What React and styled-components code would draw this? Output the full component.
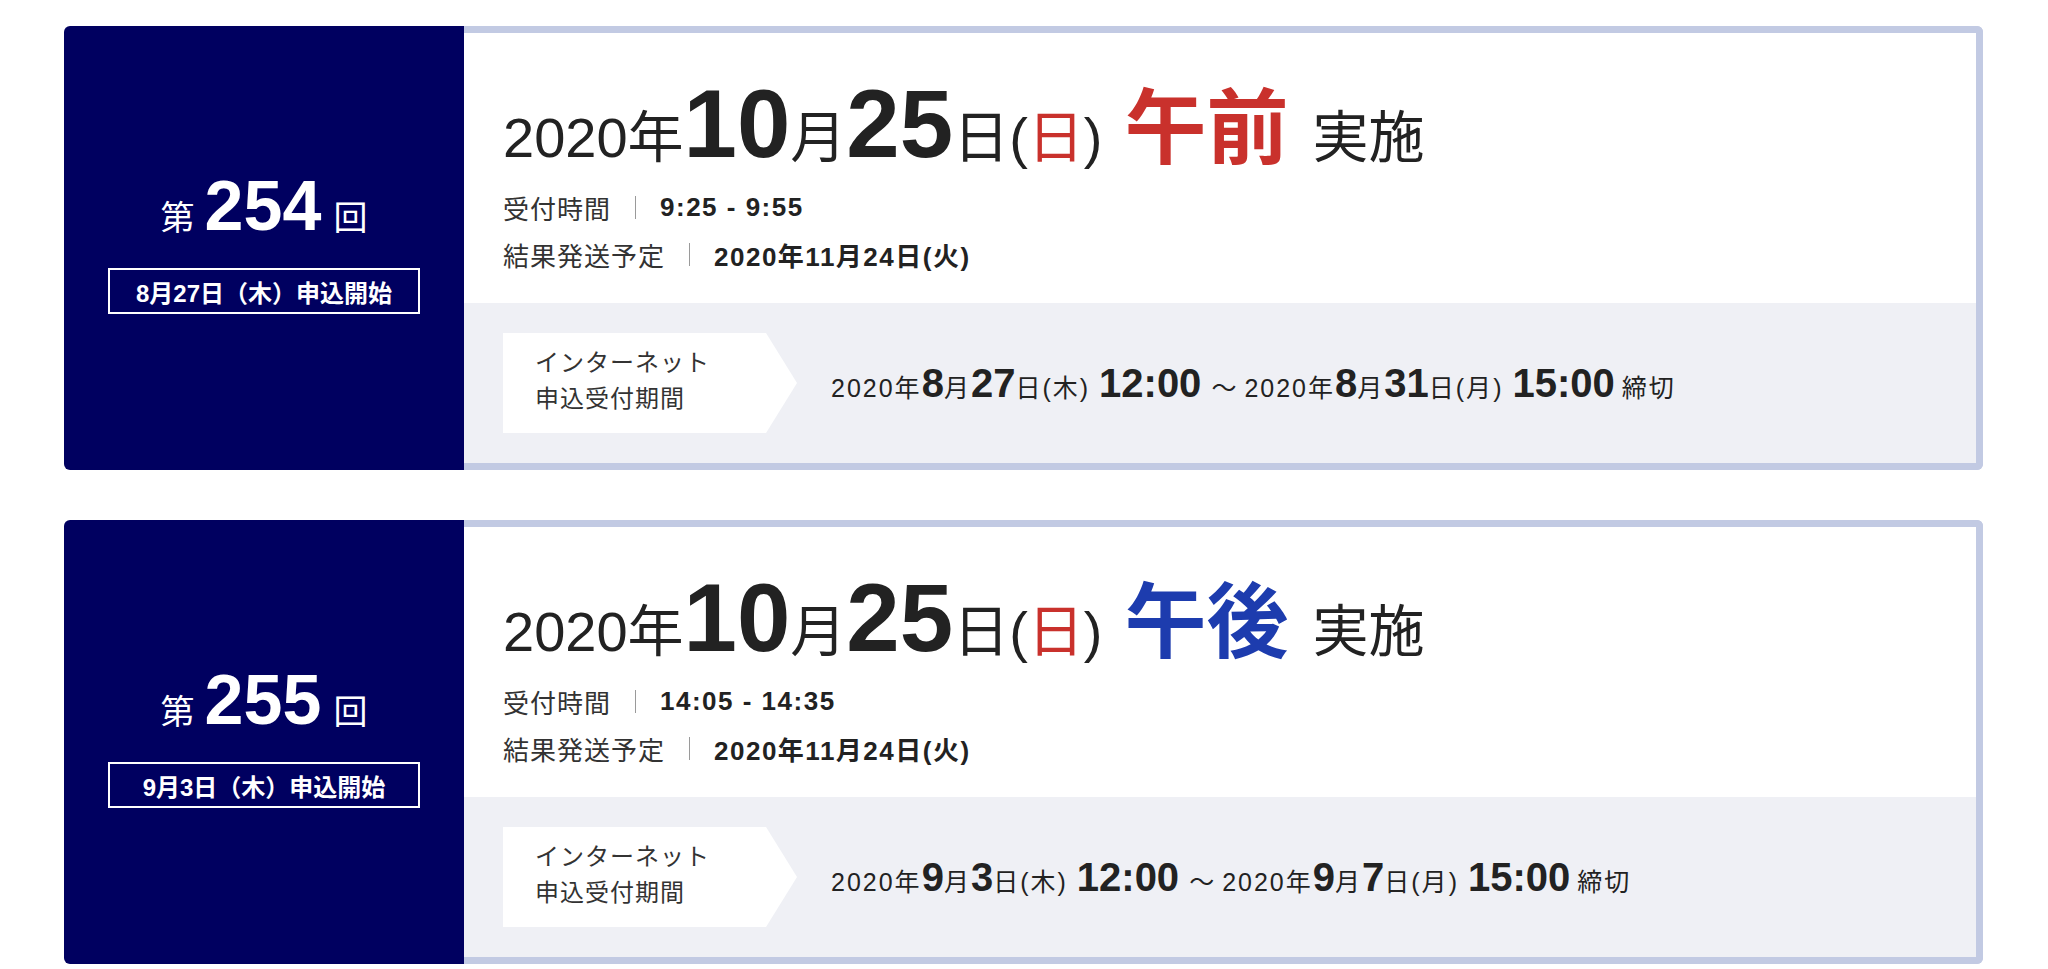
import React from 'react';
import styled, { createGlobalStyle } from 'styled-components';

const GlobalStyle = createGlobalStyle`
  body {
    margin: 0;
    background: #fff;
    color: #222;
    font-family: 'Liberation Sans', 'Noto Sans CJK JP', sans-serif;
  }
`;

const Page = styled.div`
  display: flex;
  flex-direction: column;
  gap: 50px;
  padding: 26px 65px 0 64px;
`;

const Card = styled.section`
  display: flex;
  height: 444px;
`;

const Side = styled.div`
  width: 400px;
  flex-shrink: 0;
  display: flex;
  flex-direction: column;
  align-items: center;
  justify-content: center;
  gap: 27px;
  padding-bottom: 11px;
  box-sizing: border-box;
  background: #000060;
  border-radius: 6px 0 0 6px;
  color: #fff;
`;

const Round = styled.div`
  display: flex;
  align-items: baseline;
  line-height: 1;

  small {
    font-size: 34px;
  }

  strong {
    font-size: 70px;
    font-weight: 700;
    margin: 0 12px 0 10px;
  }
`;

const StartBox = styled.div`
  width: 312px;
  height: 46px;
  box-sizing: border-box;
  border: 2px solid #fff;
  display: flex;
  align-items: center;
  justify-content: center;
  font-size: 24px;
  font-weight: 700;
`;

const Main = styled.div`
  flex: 1;
  display: flex;
  flex-direction: column;
  border: 7px solid #c2cae3;
  border-left: none;
  border-radius: 0 6px 6px 0;
  overflow: hidden;
`;

const Info = styled.div`
  background: #fff;
  padding: 43px 39px 25px;
`;

const Title = styled.h2`
  margin: 0;
  display: flex;
  align-items: baseline;
  font-size: 56px;
  font-weight: 400;
  line-height: 1;
  color: #222;

  b {
    font-size: 96px;
    font-weight: 700;
  }

  .sun {
    color: #c9312c;
  }
`;

const Period = styled.span`
  font-size: 82px;
  font-weight: 700;
  margin: 0 24px 0 22px;
  color: ${(p) => (p.tone === 'pm' ? '#1d3cae' : '#c9312c')};
`;

const Rows = styled.div`
  margin-top: 12px;
`;

const Row = styled.div`
  display: flex;
  align-items: center;
  height: 47px;
  font-size: 26px;
  letter-spacing: 1px;
  color: #333;

  strong {
    color: #222;
    font-weight: 700;
    letter-spacing: 1.5px;
  }
`;

const Divider = styled.span`
  width: 1px;
  height: 23px;
  background: #9a9a9a;
  margin: 0 24px 0 24px;
`;

const Apply = styled.div`
  flex: 1;
  display: flex;
  align-items: center;
  padding: 0 39px;
  background: #eff0f5;
`;

const Tag = styled.div`
  width: 294px;
  height: 100px;
  flex-shrink: 0;
  box-sizing: border-box;
  padding: 0 0 5px 32px;
  display: flex;
  flex-direction: column;
  justify-content: center;
  background: #fff;
  clip-path: polygon(0 0, 263px 0, 100% 50%, 263px 100%, 0 100%);
  font-size: 24px;
  letter-spacing: 1px;
  line-height: 36px;
  color: #333;
`;

const Dates = styled.div`
  display: flex;
  align-items: baseline;
  margin-left: 34px;
  font-size: 25px;
  letter-spacing: 2px;
  line-height: 1;
  color: #222;

  b {
    font-size: 40px;
    font-weight: 700;
    letter-spacing: 0;
  }

  .time {
    margin-left: 9px;
  }

  .tilde {
    margin: 0 6px 0 10px;
  }

  .end {
    margin-left: 7px;
  }
`;

const sessions = [
  {
    no: 254,
    start: '8月27日（木）申込開始',
    period: '午前',
    tone: 'am',
    reception: '9:25 - 9:55',
    result: '2020年11月24日(火)',
    from: { m: 8, d: 27, w: '木' },
    to: { m: 8, d: 31, w: '月' }
  },
  {
    no: 255,
    start: '9月3日（木）申込開始',
    period: '午後',
    tone: 'pm',
    reception: '14:05 - 14:35',
    result: '2020年11月24日(火)',
    from: { m: 9, d: 3, w: '木' },
    to: { m: 9, d: 7, w: '月' }
  }
];

const DateText = ({ m, d, w }) => (
  <>
    <span>2020年</span>
    <b>{m}</b>
    <span>月</span>
    <b>{d}</b>
    <span>日({w})</span>
  </>
);

const Session = ({ s }) => (
  <Card>
    <Side>
      <Round>
        <small>第</small>
        <strong>{s.no}</strong>
        <small>回</small>
      </Round>
      <StartBox>{s.start}</StartBox>
    </Side>
    <Main>
      <Info>
        <Title>
          <span>2020年</span>
          <b>10</b>
          <span>月</span>
          <b>25</b>
          <span>
            日(<span className="sun">日</span>)
          </span>
          <Period tone={s.tone}>{s.period}</Period>
          <span>実施</span>
        </Title>
        <Rows>
          <Row>
            受付時間
            <Divider />
            <strong>{s.reception}</strong>
          </Row>
          <Row>
            結果発送予定
            <Divider />
            <strong>{s.result}</strong>
          </Row>
        </Rows>
      </Info>
      <Apply>
        <Tag>
          <span>インターネット</span>
          <span>申込受付期間</span>
        </Tag>
        <Dates>
          <DateText {...s.from} />
          <b className="time">12:00</b>
          <span className="tilde">〜</span>
          <DateText {...s.to} />
          <b className="time">15:00</b>
          <span className="end">締切</span>
        </Dates>
      </Apply>
    </Main>
  </Card>
);

const App = () => (
  <>
    <GlobalStyle />
    <Page>
      {sessions.map((s) => (
        <Session key={s.no} s={s} />
      ))}
    </Page>
  </>
);

export default App;
